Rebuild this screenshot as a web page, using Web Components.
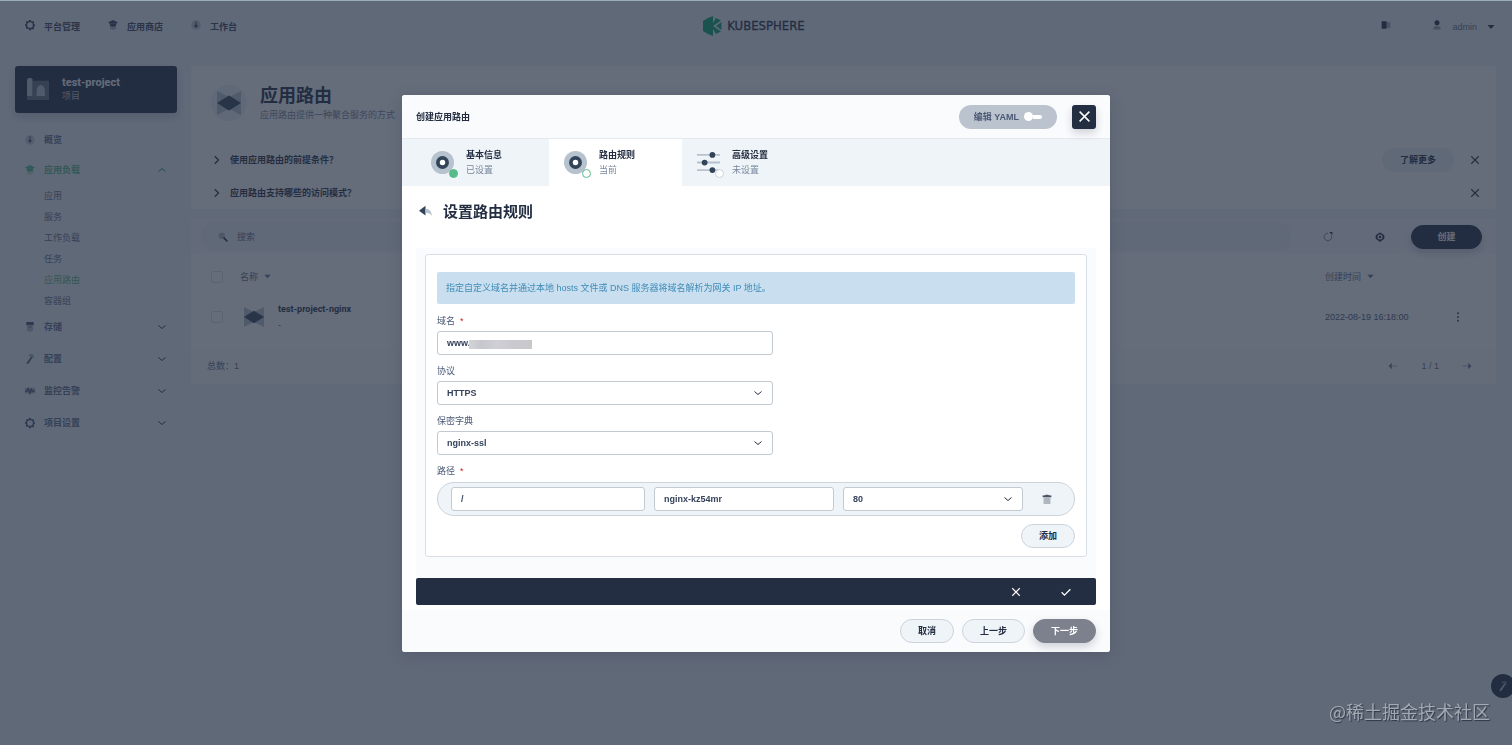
<!DOCTYPE html>
<html lang="zh-CN">
<head>
<meta charset="utf-8">
<title>KubeSphere - 应用路由</title>
<style>
  html, body { margin: 0; min-height: 100vh; }
  body {
    --dark: #242e42; --muted: #79879c; --green: #55bc8a; --line: #ccd3db; --soft: #eff4f9;
    font: 9px/12px "Liberation Sans", "Noto Sans CJK SC", sans-serif;
    color: var(--dark); background: var(--soft);
  }
</style>
</head>
<body>
<ks-app></ks-app>
<script>
const RESET = `*{box-sizing:border-box} button,input,select{font:inherit;color:inherit;margin:0}
 button{cursor:pointer;border:0;background:none;padding:0} a{color:inherit;text-decoration:none}
 h1,h2,h3,p{margin:0;font-weight:inherit;font-size:inherit}`;

function define(name, css, html) {
  customElements.define(name, class extends HTMLElement {
    constructor() {
      super();
      this.attachShadow({ mode: 'open' });
    }
    connectedCallback() {
      if (this.shadowRoot.childNodes.length) return;
      const t = document.createElement('template');
      t.innerHTML = `<style>${RESET}${css}</style>${typeof html === 'function' ? html(this) : html}`;
      this.shadowRoot.append(t.content.cloneNode(true));
    }
  });
}

/* Icons: 16-unit grid, dark strokes with a lighter second tone. */
const ICONS = {
  cogwheel: '<path fill="currentColor" fill-rule="evenodd" d="M6.500 0h3l.5 1.800 1.500.6 1.700-.8 1.700 1.900-.9 1.600.6 1.500 1.400.5v2.600l-1.500.5-.6 1.500.9 1.600-1.800 1.800-1.600-.9-1.500.7-.5 1.600h-3L6 14.300l-1.500-.6-1.700.8-1.700-1.700.8-1.700-.6-1.500L0 9.200V6.700l1.500-.5L2 4.700l-.8-1.600L3 1.400l1.600.9L6 1.700zM8 3.500a4.500 4.500 0 100 9 4.500 4.500 0 000-9z"/>',
  store: '<path fill="currentColor" d="M8 0l8 4-3 2H3L0 4z"/><path fill="currentColor" d="M3 6h10v3l-5 2-5-2z"/><path fill="currentColor" opacity=".35" d="M3 9l5 3 5-3v5l-5 2-5-2z"/>',
  meter: '<circle cx="8" cy="8" r="7.500" fill="currentColor" opacity=".25"/><path fill="currentColor" d="M7.200 2h1.600v5L11 9l-2 3H7L5 9l2.200-2z"/>',
  storage: '<path fill="currentColor" d="M2 0h12v5H2z"/><path fill="currentColor" opacity=".35" d="M3 5h10v9l-5 2-5-2z"/><path stroke="currentColor" d="M5 8h6"/>',
  hammer: '<path fill="currentColor" d="M10 4l2 1.500L5 16l-3-1z"/><path fill="currentColor" opacity=".5" d="M6 1l6-1 3 5-1.500 1L10 4 6 3z"/>',
  monitor: '<path fill="currentColor" opacity=".4" d="M0 3h16v9H0z"/><path fill="none" stroke="currentColor" stroke-width="2" d="M0 8h3l2-4 3 8 2-7 2 3h4"/>',
  book: '<path fill="currentColor" d="M1 2h8v12H1z"/><path fill="currentColor" opacity=".35" d="M9 3h6v10H9z"/>',
  user: '<circle cx="8" cy="4.500" r="4" fill="currentColor"/><path fill="currentColor" opacity=".4" d="M2 15q0-6 6-6t6 6z"/>',
  caret: '<path fill="currentColor" d="M1 4h14l-7 8z"/>',
  down: '<path fill="none" stroke="currentColor" stroke-width="2" d="M1 5l7 6 7-6"/>',
  up: '<path fill="none" stroke="currentColor" stroke-width="2.400" d="M1 11l7-6 7 6"/>',
  right: '<path fill="none" stroke="currentColor" stroke-width="2" d="M6 2l6 6-6 6"/>',
  close: '<path fill="none" stroke="currentColor" stroke-width="1.800" d="M2 2l12 12M14 2L2 14"/>',
  check: '<path fill="none" stroke="currentColor" stroke-width="2" d="M1 8.500l4.500 4.500L15 3.500"/>',
  search: '<circle cx="6" cy="6" r="5" fill="currentColor" opacity=".3"/><path stroke="currentColor" stroke-width="2.500" d="M9 9l6 6"/>',
  refresh: '<path fill="none" stroke="currentColor" stroke-width="1.500" opacity=".6" d="M8 2a6 6 0 105.500 4"/><path fill="currentColor" d="M10 0h5v5z"/>',
  gear: '<path fill="currentColor" fill-rule="evenodd" d="M6 1h4l1 2 2 .5L15 6v4l-2 2.500-2 .5-1 2H6l-1-2-2-.5L1 10V6l2-2.500L5 3zM8 4a4 4 0 100 8 4 4 0 000-8z"/><circle cx="8" cy="8" r="2" fill="currentColor"/>',
  more: '<g fill="currentColor"><circle cx="8" cy="2" r="1.700"/><circle cx="8" cy="8" r="1.700"/><circle cx="8" cy="14" r="1.700"/></g>',
  prev: '<path fill="currentColor" d="M1 8l5-5v10z"/><path stroke="currentColor" stroke-width="2" opacity=".4" d="M6 8h9"/>',
  next: '<path fill="currentColor" d="M15 8l-5-5v10z"/><path stroke="currentColor" stroke-width="2" opacity=".4" d="M1 8h9"/>',
  back: '<path fill="#324558" d="M0 7l8-6v12z"/><path fill="#b6c2cd" d="M8 4.500c5 0 7.500 3.500 8 9-2-3-4-4-8-4z"/>',
  trash: '<path fill="#4a5465" d="M1 2.500l4-.5 1-1h4l1 1 4 .5V5H1z"/><path fill="#b0b6be" d="M2.500 5h11v11h-11z"/>',
  route: '<path fill="#b6c2cd" d="M0 0l8 4 8-4v16l-8-4-8 4z"/><path fill="#324558" d="M0 8l8-5 8 5-8 5z"/>',
  project: '<path fill="#b6c2cd" d="M0 1l1-1h2l1 1v12H0z"/><path fill="#b6c2cd" opacity=".45" d="M4 2h12v14H0v-3h4z"/><path fill="#b6c2cd" d="M7 13V8.500L8 6l2-1 2 1 1 2.500V13z"/>',
  disc: '<circle cx="8" cy="8" r="8" fill="#b6c2cd"/><circle cx="8" cy="8" r="3.200" fill="#fff" stroke="#324558" stroke-width="2.600"/>',
  slider: '<path stroke="#b6c2cd" stroke-width="1.300" d="M0 2.700h16M0 8h16M0 13.300h16"/><g fill="#324558"><circle cx="10.700" cy="2.700" r="2"/><circle cx="5.300" cy="8" r="2"/><circle cx="10.700" cy="13.300" r="2"/></g>'
};
define('ks-icon', ':host{display:inline-flex;flex:none} svg{display:block;overflow:visible}', el => {
  const s = el.getAttribute('size') || 10;
  return `<svg width="${s}" height="${s}" viewBox="0 0 16 16" aria-hidden="true">${ICONS[el.getAttribute('name')]}</svg>`;
});

define('ks-logo', `:host{display:inline-flex;align-items:center;gap:5px}
  span{font:400 13px/20px "Liberation Sans Narrow","DejaVu Sans Condensed",sans-serif;-webkit-text-stroke:.3px currentColor}`,
  `<svg width="19" height="20" viewBox="0 0 19 20" aria-hidden="true"><g fill="#00a971"><path d="M0 5l5-3v16l-5-3zM5 2L10 0v7L13 2l5 2.500-8 5.500 8 5.500-5 2.500-3-5v7L5 18z"/><path d="M18.500 6v8L13 10z"/></g></svg><span>KUBESPHERE</span>`);

define('ks-button', `:host{display:inline-flex}
  button{height:24px;min-width:54px;padding:0 17px;border-radius:12px;border:1px solid var(--line);background:var(--soft);font-weight:700;white-space:nowrap}
  :host([plain]) button{border-color:transparent}
  :host([primary]) button{background:var(--dark);border-color:var(--dark);color:#fff;box-shadow:0 4px 8px rgba(36,46,66,.2);min-width:71px}
  :host([disabled]) button{background:#7c818d;border-color:#7c818d;color:#fff;box-shadow:0 4px 8px rgba(36,46,66,.2)}`,
  '<button type="button"><slot></slot></button>');

define('ks-header', `:host{display:grid;grid-template-columns:1fr auto 1fr;align-items:center;height:53px;padding:0 17px}
  nav{display:flex;gap:28px;font-weight:700;color:#36435c;padding-left:8px}
  nav a,.user button{display:flex;align-items:center;gap:9px}
  nav ks-icon,.user ks-icon{margin-bottom:3px}
  .user{display:flex;justify-content:flex-end;align-items:center;gap:41px}
  .user button{color:#5f6f8a;gap:10px} .user ks-icon{color:var(--dark)} .user ks-icon:last-child{margin:0}
  ks-logo{margin:0 4px 2px 0}`,
  `<nav aria-label="主导航"><a href="#"><ks-icon name="cogwheel"></ks-icon>平台管理</a><a href="#"><ks-icon name="store"></ks-icon>应用商店</a><a href="#"><ks-icon name="meter"></ks-icon>工作台</a></nav>
  <ks-logo></ks-logo>
  <div class="user"><ks-icon name="book"></ks-icon><button type="button"><ks-icon name="user"></ks-icon>admin<ks-icon name="caret" size="8"></ks-icon></button></div>`);

define('ks-nav-item', `:host{display:block;color:#5f6f8a;font-weight:700}
  a{display:flex;align-items:center;gap:9px;height:32px;padding:0 11px 0 10px}
  ks-icon{color:#4a5974} a>span{flex:1} a>span+ks-icon{color:var(--dark)}
  :host([short]) a{height:30px}
  :host([active]),:host([active]) a>ks-icon{color:var(--green)}
  :host([sub]){font-weight:400} :host([sub]) a{height:21px;padding-left:29px}`,
  el => `<a href="#">${el.getAttribute('icon') ? `<ks-icon name="${el.getAttribute('icon')}"></ks-icon>` : ''}<span><slot></slot></span>${el.getAttribute('arrow') ? `<ks-icon name="${el.getAttribute('arrow')}" size="8"></ks-icon>` : ''}</a>`);

define('ks-sidebar', `:host{display:block}
  .project{display:flex;gap:13px;align-items:center;height:47px;width:100%;padding:0 12px 1px;border-radius:3px;background:var(--dark);color:#fff;text-align:left;box-shadow:0 4px 8px rgba(36,46,66,.2);margin-bottom:12px}
  .project b{display:block;font:700 11px/15px Roboto,sans-serif}.project small{display:block;font-size:9px;line-height:13px;color:#b6c2cd}`,
  `<button type="button" class="project"><ks-icon name="project" size="22"></ks-icon><span><b>test-project</b><small>项目</small></span></button>
  <nav aria-label="项目导航">
  <ks-nav-item short icon="meter">概览</ks-nav-item><ks-nav-item short icon="store" arrow="up" active>应用负载</ks-nav-item>
  <ks-nav-item sub>应用</ks-nav-item><ks-nav-item sub>服务</ks-nav-item><ks-nav-item sub>工作负载</ks-nav-item><ks-nav-item sub>任务</ks-nav-item><ks-nav-item sub active>应用路由</ks-nav-item><ks-nav-item sub>容器组</ks-nav-item>
  <ks-nav-item icon="storage" arrow="down">存储</ks-nav-item><ks-nav-item icon="hammer" arrow="down">配置</ks-nav-item><ks-nav-item icon="monitor" arrow="down">监控告警</ks-nav-item><ks-nav-item icon="cogwheel" arrow="down">项目设置</ks-nav-item></nav>`);

define('ks-banner', `:host{display:block;background:#fff;border-radius:3px;height:143px;padding:10px 16px 0 20px}
  header{display:flex;gap:13px;align-items:center;height:54px}
  .mark{display:grid;place-items:center;width:36px;height:36px;border-radius:18px;background:var(--soft)}
  h1{font:700 18px/24px "Liberation Sans","Noto Sans CJK SC",sans-serif} p{color:var(--muted);line-height:14px}
  .faq{display:flex;align-items:center;height:33px;font-weight:700}
  .faq button{display:flex}
  .faq>button:first-child{gap:9px;align-items:center;flex:1;text-align:left;font-weight:700}
  .faq ks-button{margin-right:16px} ul{list-style:none;margin:13px 0 0;padding:0}`,
  `<header><span class="mark"><ks-icon name="route" size="24"></ks-icon></span><div><h1>应用路由</h1><p>应用路由提供一种聚合服务的方式</p></div></header>
  <ul><li class="faq"><button type="button"><ks-icon name="right"></ks-icon>使用应用路由的前提条件？</button><ks-button plain>了解更多</ks-button><button type="button" aria-label="关闭"><ks-icon name="close"></ks-icon></button></li>
  <li class="faq"><button type="button"><ks-icon name="right"></ks-icon>应用路由支持哪些的访问模式？</button><button type="button" aria-label="关闭"><ks-icon name="close"></ks-icon></button></li></ul>`);

define('ks-list', `:host{display:block;background:#fff;border-radius:3px}
  .bar{display:flex;align-items:center;height:35px;padding:2px 14px 0 10px;background:#f9fbfd}
  .search{display:flex;flex:1;align-items:center;gap:9px;height:29px;padding:0 17px;border-radius:14px;background:var(--soft);margin-right:32px}
  .search input{border:0;background:none;outline:0;flex:1;height:20px;padding:0} input::placeholder{color:#5f6f8a;opacity:1}
  .bar>button{color:var(--dark);margin-right:42px;display:flex}.bar>button+button{margin-right:26px}
  table{width:100%;border-collapse:collapse;table-layout:fixed} th{font-weight:400;text-align:left;height:47px;padding:0;color:#5f6f8a}
  td{height:33px;padding:0;color:#4a5974}
  th:first-child,td:first-child{width:49px;padding-left:20px}
  th:nth-child(3),td:nth-child(3){width:128px} th:last-child,td:last-child{width:43px}
  th ks-icon{margin-left:6px} td button{display:flex}
  input[type=checkbox]{appearance:none;display:block;width:12px;height:12px;border:1px solid #d8dfe6;border-radius:2px}
  .name{display:flex;gap:14px;align-items:center;padding-left:4px}.name b{display:block;color:var(--dark);font:700 9px/16px Roboto,sans-serif}.name small{font-size:9px;line-height:16px;display:block}
  footer{display:flex;justify-content:space-between;align-items:center;height:36px;margin-top:15px;padding:0 24px 0 16px;color:#5f6f8a;background:#fcfdfe}
  .pages{display:flex;gap:23px;align-items:center} .pages button{display:flex}`,
  `<div class="bar"><label class="search"><ks-icon name="search"></ks-icon><input type="text" placeholder="搜索" aria-label="搜索"></label><button type="button" aria-label="刷新"><ks-icon name="refresh"></ks-icon></button><button type="button" aria-label="设置"><ks-icon name="gear"></ks-icon></button><ks-button primary>创建</ks-button></div>
  <table><thead><tr><th><input type="checkbox" aria-label="全选"></th><th>名称<ks-icon name="caret" size="7"></ks-icon></th><th>创建时间<ks-icon name="caret" size="7"></ks-icon></th><th></th></tr></thead>
  <tbody><tr><td><input type="checkbox" aria-label="选择 test-project-nginx"></td><td><div class="name"><ks-icon name="route" size="20"></ks-icon><div><b>test-project-nginx</b><small>-</small></div></div></td><td>2022-08-19 16:18:00</td><td><button type="button" aria-label="更多"><ks-icon name="more"></ks-icon></button></td></tr></tbody></table>
  <footer><span>总数：1</span><div class="pages"><button type="button" aria-label="上一页"><ks-icon name="prev"></ks-icon></button><span>1 / 1</span><button type="button" aria-label="下一页"><ks-icon name="next"></ks-icon></button></div></footer>`);

define('ks-step', `:host{display:flex;align-items:center;gap:12px;width:133px;height:47px;padding-left:15px}
  :host([state=current]){background:#fff}
  .icon{display:flex;position:relative} i{position:absolute;right:-4px;bottom:-4px;width:9px;height:9px;border-radius:5px;border:1px solid var(--line);background:#fff}
  :host([state=done]) i{background:var(--green);border-color:var(--green)} :host([state=current]) i{border-color:var(--green)}
  b,span{display:block;line-height:15px}.text span{color:var(--muted)}`,
  el => `<span class="icon"><ks-icon name="${el.getAttribute('icon')}" size="23"></ks-icon><i></i></span><div class="text"><b>${el.getAttribute('label')}</b><span><slot></slot></span></div>`);

/* One form control; with the select attribute it becomes a drop-down. */
define('ks-field', `:host{display:block}
  label{display:block;height:16px;line-height:12px;color:#4a5974;white-space:pre} label em{color:#ca2621;font-style:normal}
  .box{display:grid;align-items:center;position:relative}
  .box>*{grid-area:1/1} ks-icon{justify-self:end;margin-right:11px;pointer-events:none}
  input,select{appearance:none;width:100%;height:24px;border:1px solid #c1c9d1;border-radius:3px;background:#fff;padding:0 9px;font-weight:700;outline:0;color:#36435c}
  ::slotted(*){position:absolute;left:32px;top:9px}`,
  el => {
    const label = el.getAttribute('label'), hint = el.getAttribute('hint') || '', v = el.getAttribute('value');
    const control = el.hasAttribute('select')
      ? `<select id="c" aria-label="${label || hint}"><option>${v}</option></select><ks-icon name="down" size="8"></ks-icon>`
      : `<input id="c" type="text" value="${v}" aria-label="${label || hint}">`;
    return `${label ? `<label for="c">${label}${el.hasAttribute('required') ? '  <em>*</em>' : ''}</label>` : ''}<div class="box">${control}<slot></slot></div>`;
  });

define('ks-mosaic', `:host{display:block;width:63px;height:9px;background:linear-gradient(90deg,#d3d3d8,#c6c6cd 20%,#cfcfd5 45%,#c9c9d0 70%,#c8c8cc)}`, '');

define('ks-dialog', `:host{display:block;width:708px;max-width:100%;background:#fff;border-radius:3px;box-shadow:0 4px 16px rgba(36,46,66,.2);overflow:hidden}
  .top{display:flex;align-items:center;height:44px;padding:0 14px;background:#fafbfd;border-bottom:1px solid #e3e9ef}
  h2{flex:1;font-weight:700}
  .yaml{display:flex;align-items:center;gap:5px;height:24px;padding:0 15px;border-radius:12px;background:#bac3ce;font-weight:700;color:#4a5974}
  .switch{display:flex;align-items:center}.switch::before{content:"";width:9px;height:9px;border-radius:5px;background:#fff}.switch::after{content:"";width:9px;height:4px;border-radius:0 2px 2px 0;background:#fff}
  .x{display:grid;place-items:center;width:24px;height:24px;margin-left:15px;border-radius:3px;background:var(--dark);color:#fff;box-shadow:0 4px 8px rgba(36,46,66,.2)}
  .steps{display:flex;background:var(--soft);padding-left:14px}
  .title{display:flex;align-items:center;gap:11px;height:51px;padding:0 17px}
  .title button{display:flex} h3{font:700 15px/20px "Liberation Sans","Noto Sans CJK SC",sans-serif}
  .body{margin:11px 14px 0;padding:6px 9px 21px;background:#f9fbfd}
  .card{background:#fff;border:1px solid #d8dfe6;border-radius:3px;padding:17px 11px 8px}
  .tip{height:32px;line-height:32px;padding:0 9px;border-radius:2px;background:#c9deee;color:#3f8cb8}
  .half{width:336px;max-width:100%;margin-top:11px} .half+.half{margin-top:10px}
  .caption{display:block;margin-top:10px;line-height:12px;color:#4a5974;white-space:pre} .caption em{color:#ca2621;font-style:normal}
  .rule{display:grid;grid-template-columns:194fr 180fr 180fr 30px;gap:9px;align-items:center;height:34px;margin-top:5px;padding:0 12px 0 13px;border:1px solid var(--line);border-radius:17px;background:var(--soft)}
  .rule>button{display:grid;place-items:center}
  .add{display:flex;justify-content:flex-end;margin-top:8px}
  .confirm{display:flex;justify-content:flex-end;align-items:center;gap:40px;height:27px;margin:0 14px;padding:0 25px;border-radius:2px;background:var(--dark);color:#fff}
  .confirm button{display:flex}
  .foot{display:flex;justify-content:flex-end;gap:8px;margin-top:5px;padding:9px 14px;background:#fafbfd}`,
  `<div class="top"><h2>创建应用路由</h2><button type="button" class="yaml" role="switch" aria-checked="false">编辑 YAML<span class="switch"></span></button><button type="button" class="x" aria-label="关闭"><ks-icon name="close" size="13"></ks-icon></button></div>
  <div class="steps"><ks-step icon="disc" state="done" label="基本信息">已设置</ks-step><ks-step icon="disc" state="current" label="路由规则">当前</ks-step><ks-step icon="slider" label="高级设置">未设置</ks-step></div>
  <div class="title"><button type="button" aria-label="返回"><ks-icon name="back" size="13"></ks-icon></button><h3>设置路由规则</h3></div>
  <div class="body"><div class="card">
    <p class="tip">指定自定义域名并通过本地 hosts 文件或 DNS 服务器将域名解析为网关 IP 地址。</p>
    <ks-field class="half" label="域名" required value="www."><ks-mosaic></ks-mosaic></ks-field>
    <ks-field class="half" label="协议" select value="HTTPS"></ks-field>
    <ks-field class="half" label="保密字典" select value="nginx-ssl"></ks-field>
    <span class="caption">路径  <em>*</em></span>
    <div class="rule" role="group" aria-label="路径"><ks-field hint="路径" value="/"></ks-field><ks-field hint="服务" value="nginx-kz54mr"></ks-field><ks-field hint="端口" select value="80"></ks-field><button type="button" aria-label="删除"><ks-icon name="trash"></ks-icon></button></div>
    <div class="add"><ks-button>添加</ks-button></div>
  </div></div>
  <div class="confirm"><button type="button" aria-label="取消编辑"><ks-icon name="close"></ks-icon></button><button type="button" aria-label="确认"><ks-icon name="check"></ks-icon></button></div>
  <div class="foot"><ks-button>取消</ks-button><ks-button>上一步</ks-button><ks-button disabled>下一步</ks-button></div>`);

define('ks-app', `:host{display:block}
  .layout{display:grid;grid-template-columns:162px 1fr;gap:14px;padding:13px 16px 0 15px}
  main{display:grid;gap:9px;align-content:start}
  .tool{position:fixed;right:-3px;bottom:47px;width:24px;height:24px;border-radius:12px;background:var(--dark);color:#b6c2cd;display:grid;place-items:center}
  .mask{position:fixed;inset:0;display:grid;place-items:center;padding-top:1px;border-top:1px solid #9aafbe;background:rgba(36,46,66,.7);background-clip:padding-box}
  .credit{position:fixed;right:22px;bottom:21px;font:400 18px/26px "Noto Sans CJK SC",sans-serif;color:#a3a9b3;text-shadow:1px 1px 1px #2e3748}`,
  `<ks-header></ks-header><div class="layout"><ks-sidebar></ks-sidebar><main><ks-banner></ks-banner><ks-list></ks-list></main></div>
  <button type="button" class="tool" aria-label="工具箱"><ks-icon name="hammer"></ks-icon></button>
  <div class="mask"><ks-dialog role="dialog" aria-label="创建应用路由"></ks-dialog></div>
  <div class="credit">@稀土掘金技术社区</div>`);
</script>
</body>
</html>
